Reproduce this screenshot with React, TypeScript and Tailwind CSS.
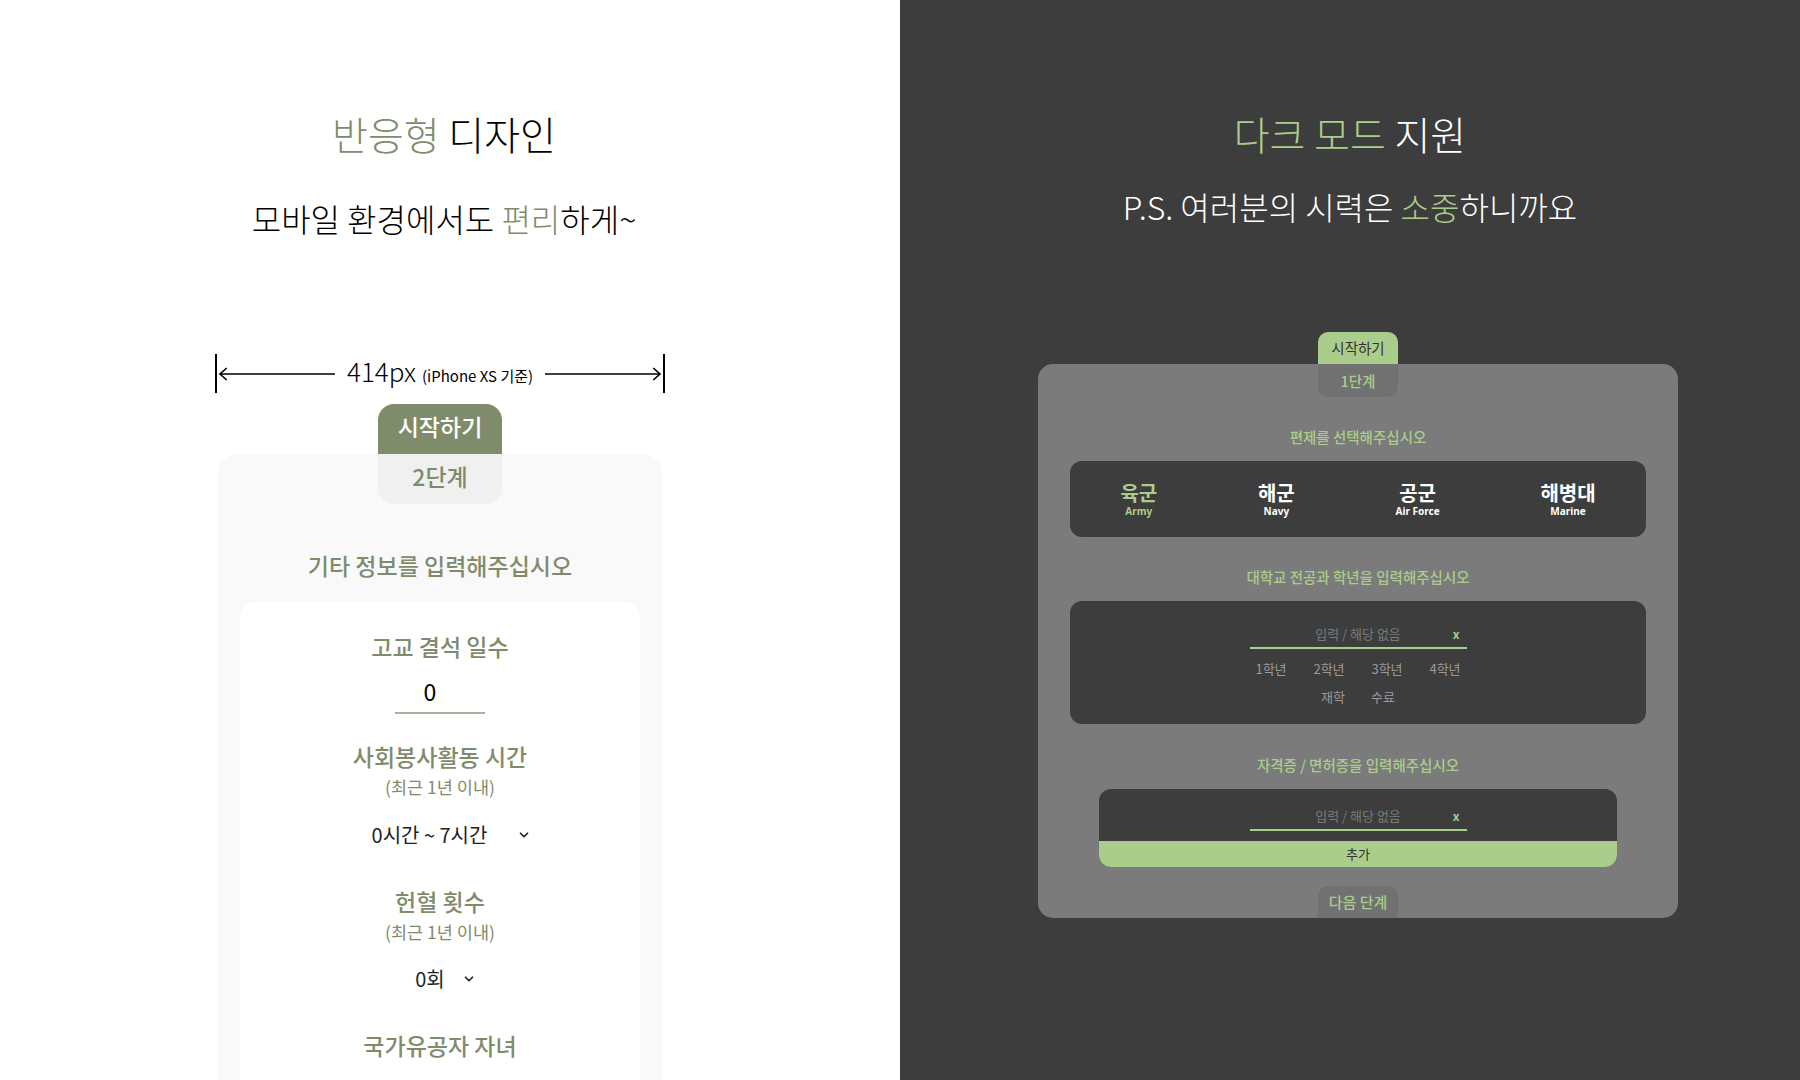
import { ChevronDown } from "lucide-react";

const font = { fontFamily: '"Noto Sans CJK KR", "Noto Sans", sans-serif' };

function MeasureArrow() {
  return (
    <div className="flex h-[39px] w-[450px] items-center">
      <div className="h-[39px] w-[2px] bg-black" />
      <svg className="ml-[2px] h-[14px] flex-1" viewBox="0 0 120 14" preserveAspectRatio="none">
        <path d="M1 7 H120 M8 1 L1 7 L8 13" stroke="black" strokeWidth="1.6" fill="none" vectorEffect="non-scaling-stroke" />
      </svg>
      <div className="flex items-baseline px-[12px] pb-[6px] text-black">
        <span className="text-[26px] font-light leading-[30px]">414px</span>
        <span className="ml-[6px] text-[15px] leading-[20px]">(iPhone XS 기준)</span>
      </div>
      <svg className="mr-[2px] h-[14px] flex-1" viewBox="0 0 120 14" preserveAspectRatio="none">
        <path d="M0 7 H119 M112 1 L119 7 L112 13" stroke="black" strokeWidth="1.6" fill="none" vectorEffect="non-scaling-stroke" />
      </svg>
      <div className="h-[39px] w-[2px] bg-black" />
    </div>
  );
}

function LightPanel() {
  const label = "text-[23px] font-medium leading-[28px] text-[#7f8c6b]";
  const sub = "text-[17.5px] leading-[22px] text-[#7f8c6b]";
  return (
    <section className="flex h-[1080px] w-[900px] flex-col items-center overflow-hidden bg-white pr-[20px]">
      <h1 className="ml-[8px] mt-[108px] text-[39px] font-light leading-[50px] text-black">
        <span className="text-[#7f8c6b]">반응형</span> 디자인
      </h1>
      <p className="ml-[8px] mt-[40px] text-[32px] font-light leading-[40px] text-black">
        모바일 환경에서도 <span className="text-[#7f8c6b]">편리</span>하게~
      </p>
      <div className="mt-[116px]">
        <MeasureArrow />
      </div>
      <div className="mt-[61px] flex w-[444px] flex-col items-center rounded-[20px] bg-[#f9f9f9] px-[22px] pb-[60px]">
        <div className="relative -mt-[50px] flex w-[124px] flex-col overflow-hidden rounded-[16px]">
          <div className="flex h-[50px] items-center justify-center bg-[#7f8c6b] pb-[5px] text-[23px] font-medium text-white">
            시작하기
          </div>
          <div className="flex h-[50px] items-center justify-center bg-[#f0f0f0] pb-[5px] text-[23px] font-medium text-[#7f8c6b]">
            2단계
          </div>
        </div>
        <h2 className={`mt-[47px] ${label}`}>기타 정보를 입력해주십시오</h2>
        <div className="mt-[23px] flex w-full flex-col items-center rounded-[16px] bg-white pb-[60px] pt-[30px]">
          <div className={label}>고교 결석 일수</div>
          <div className="mt-[17px] w-[90px] border-b-2 border-[#a9b09d] pb-[7px] pr-[20px] text-center text-[23px] leading-[28px] text-black">
            0
          </div>
          <div className={`mt-[28px] ${label}`}>사회봉사활동 시간</div>
          <div className={`mt-[6px] ${sub}`}>(최근 1년 이내)</div>
          <div className="mt-[24px] flex items-center gap-[30px] pl-[23px] text-[20px] leading-[26px] text-[#222]">
            <span>0시간 ~ 7시간</span>
            <ChevronDown size={14} strokeWidth={3} />
          </div>
          <div className={`mt-[39px] ${label}`}>헌혈 횟수</div>
          <div className={`mt-[6px] ${sub}`}>(최근 1년 이내)</div>
          <div className="mt-[23px] flex items-center gap-[17px] pl-[11px] text-[20px] leading-[26px] text-[#222]">
            <span>0회</span>
            <ChevronDown size={14} strokeWidth={3} />
          </div>
          <div className={`mt-[39px] ${label}`}>국가유공자 자녀</div>
        </div>
      </div>
    </section>
  );
}

function Field() {
  return (
    <div className="relative w-[217px] border-b-2 border-[#abcd8b] pb-[3px] text-center text-[13px] leading-[20px] text-[#7a7a7a]">
      입력 / 해당 없음
      <span className="absolute right-[7px] top-[1px] text-[12px] font-bold leading-[18px] text-[#abcd8b]">x</span>
    </div>
  );
}

function DarkCard() {
  const label = "text-[14.5px] font-medium leading-[20px] text-[#abcd8b]";
  const branches = [
    { ko: "육군", en: "Army", on: true },
    { ko: "해군", en: "Navy", on: false },
    { ko: "공군", en: "Air Force", on: false },
    { ko: "해병대", en: "Marine", on: false },
  ];
  return (
    <div className="ml-[16px] mt-[106px] flex w-[640px] flex-col items-center">
      <div className="relative z-10 flex w-[80px] flex-col overflow-hidden rounded-[10px]">
        <div className="flex h-[32px] items-center justify-center bg-[#abcd8b] text-[14.5px] leading-[20px] text-[#333]">
          시작하기
        </div>
        <div className="flex h-[33px] items-center justify-center bg-[#717171] text-[14.5px] font-medium leading-[20px] text-[#abcd8b]">
          1단계
        </div>
      </div>
      <div className="-mt-[33px] flex w-full flex-col items-center overflow-hidden rounded-[15px] bg-[#7b7b7b] pt-[33px]">
        <div className={`mt-[30px] ${label}`}>편제를 선택해주십시오</div>
        <div className="mt-[14px] flex h-[76px] w-[576px] items-center justify-around rounded-[12px] bg-[#3d3d3d]">
          {branches.map((b) => (
            <div
              key={b.en}
              className={`flex flex-col items-center font-bold ${b.on ? "text-[#abcd8b]" : "text-white"}`}
            >
              <span className="text-[20px] leading-[24px]">{b.ko}</span>
              <span className="text-[10px] leading-[12px]" style={{ fontFamily: '"Noto Sans", sans-serif' }}>
                {b.en}
              </span>
            </div>
          ))}
        </div>
        <div className={`mt-[30px] ${label}`}>대학교 전공과 학년을 입력해주십시오</div>
        <div className="mt-[14px] flex h-[123px] w-[576px] flex-col items-center rounded-[12px] bg-[#3d3d3d] pt-[23px]">
          <Field />
          <div className="mt-[11px] flex text-[13px] leading-[18px] text-[#9a9a9a]">
            {["1학년", "2학년", "3학년", "4학년"].map((g) => (
              <span key={g} className="w-[58px] text-center">
                {g}
              </span>
            ))}
          </div>
          <div className="mt-[10px] flex text-[13px] leading-[18px] text-[#9a9a9a]">
            <span className="w-[50px] text-center">재학</span>
            <span className="w-[50px] text-center">수료</span>
          </div>
        </div>
        <div className={`mt-[31px] ${label}`}>자격증 / 면허증을 입력해주십시오</div>
        <div className="mt-[14px] flex w-[518px] flex-col items-center overflow-hidden rounded-[12px] bg-[#3d3d3d] pt-[17px]">
          <Field />
          <div className="mt-[10px] flex h-[26px] w-full items-center justify-center bg-[#abcd8b] text-[13px] text-[#333]">
            추가
          </div>
        </div>
        <div className="mt-[19px] flex h-[32px] w-[80px] items-center justify-center rounded-t-[10px] bg-[#717171] text-[15px] font-medium text-[#abcd8b]">
          다음 단계
        </div>
      </div>
    </div>
  );
}

export default function App() {
  return (
    <main className="flex h-[1080px] w-[1800px] overflow-hidden" style={font}>
      <LightPanel />
      <section className="flex h-[1080px] w-[900px] flex-col items-center overflow-hidden bg-[#3d3d3d]">
        <h1 className="mt-[108px] text-[39px] font-light leading-[50px] text-white">
          <span className="text-[#abcd8b]">다크 모드</span> 지원
        </h1>
        <p className="mt-[28px] text-[32px] font-light leading-[40px] text-white">
          P.S. 여러분의 시력은 <span className="text-[#abcd8b]">소중</span>하니까요
        </p>
        <DarkCard />
      </section>
    </main>
  );
}
